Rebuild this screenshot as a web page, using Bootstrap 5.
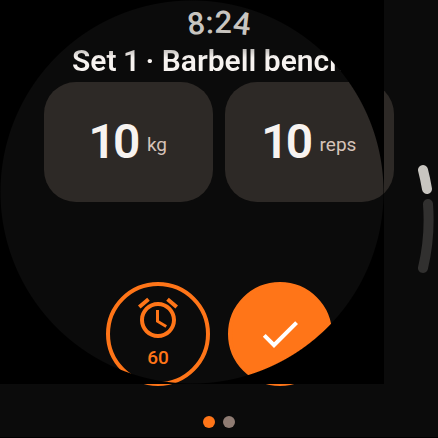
<!DOCTYPE html>
<html lang="en">
<head>
<meta charset="utf-8">
<meta name="viewport" content="width=device-width, initial-scale=1">
<title>Workout set</title>
<link href="https://cdn.jsdelivr.net/npm/bootstrap@5.3.0/dist/css/bootstrap.min.css" rel="stylesheet">
<style>
  :root { --accent: #ff7518; --surface: #0b0b0b; --tile: #2d2926; --ink: #f7f3f0; --soft: #d6c3b9; }
  body { background: var(--surface); color: var(--ink); font-family: Roboto, "Liberation Sans", sans-serif; }
  .watch { padding-bottom: 9px; border-bottom: 1px solid #000; }
  .clock { height: 40px; overflow: visible; }
  .clock text { font-size: 31px; font-weight: 500; fill: #c8c5c0; }
  .set-title {
    font-size: 30px; line-height: 42px; font-weight: 600; padding-left: 72px; font-variant-numeric: proportional-nums;
    background: linear-gradient(#bbb8b5 8px, var(--ink) 18px); -webkit-background-clip: text; background-clip: text; color: transparent;
  }
  .tiles { gap: 12px; padding: 0 44px; }
  .tile { height: 120px; border: 0; border-radius: 32px; background: var(--tile); color: var(--ink); gap: 6px; }
  .amount { font-size: 48px; line-height: 56px; font-weight: 600; font-variant-numeric: proportional-nums; }
  .unit { font-size: 19px; line-height: 24px; color: var(--soft); padding-top: 6px; }
  .actions { gap: 18px; padding-top: 80px; }
  .round { width: 104px; height: 104px; border: 4px solid var(--accent); color: var(--accent); background: transparent; }
  .round-fill { background: var(--accent); color: #fff; }
  .secs { font-size: 19px; line-height: 24px; font-weight: 500; }
  .pages { gap: 8px; padding-top: 30px; }
  .page-dot { width: 12px; height: 12px; border: 0; background: #8f7c73; }
  .page-dot.active { background: var(--accent); }
  .bezel { width: 384px; height: 384px; background: radial-gradient(circle closest-side, transparent 191px, #000 192px); }
  .scroll-arc { width: 20px; height: 120px; }
</style>
<script src="https://cdn.jsdelivr.net/npm/bootstrap@5.3.0/dist/js/bootstrap.bundle.min.js"></script>
</head>
<body>
<main class="watch position-relative overflow-hidden min-vh-100 d-flex flex-column">
  <svg class="clock d-block mx-auto" width="120" height="40" viewBox="159 0 120 40" role="img" aria-label="8:24">
    <path id="rim" d="M89 86A186 186 0 0 1 349 86" fill="none"/>
    <text text-anchor="middle"><textPath href="#rim" startOffset="50%">8:24</textPath></text>
  </svg>
  <h1 class="set-title text-nowrap overflow-hidden m-0">Set 1 · Barbell bench</h1>
  <div class="tiles d-flex">
    <button type="button" class="tile flex-fill w-50 p-0 d-flex align-items-center justify-content-center"><span class="amount">10</span><span class="unit">kg</span></button>
    <button type="button" class="tile flex-fill w-50 p-0 d-flex align-items-center justify-content-center"><span class="amount">10</span><span class="unit">reps</span></button>
  </div>
  <div class="actions d-flex justify-content-center">
    <button type="button" class="round rounded-circle p-0 d-flex flex-column align-items-center" aria-label="Rest timer, 60 seconds">
      <svg class="mt-2" width="48" height="48" viewBox="0 0 24 24" fill="currentColor" aria-hidden="true"><path d="M22 5.72l-4.6-3.86-1.29 1.53 4.6 3.86L22 5.72zM7.88 3.39L6.6 1.86 2 5.71l1.29 1.53 4.59-3.85zM12.5 8H11v6l4.75 2.85.75-1.23-4-2.37V8zM12 4c-4.97 0-9 4.03-9 9s4.02 9 9 9c4.97 0 9-4.03 9-9s-4.03-9-9-9zm0 16c-3.87 0-7-3.13-7-7s3.13-7 7-7 7 3.13 7 7-3.13 7-7 7z"/></svg>
      <span class="secs mt-1">60</span>
    </button>
    <button type="button" class="round round-fill rounded-circle p-0 d-flex align-items-center justify-content-center" aria-label="Complete set">
      <svg width="48" height="48" viewBox="0 0 24 24" fill="currentColor" aria-hidden="true"><path d="M9 16.17L4.83 12l-1.42 1.41L9 19 21 7l-1.41-1.41z"/></svg>
    </button>
  </div>
  <nav class="pages d-flex justify-content-center" aria-label="Pages">
    <button type="button" class="page-dot active rounded-circle p-0" aria-label="Page 1"></button>
    <button type="button" class="page-dot rounded-circle p-0" aria-label="Page 2"></button>
  </nav>
  <svg class="scroll-arc position-absolute top-50 end-0 translate-middle-y" viewBox="418 159 20 120" fill="none" stroke-width="10" stroke-linecap="round" aria-hidden="true">
    <path d="M428 204A210 210 0 0 1 423 268" stroke="#31302f"/>
    <path d="M423 170A210 210 0 0 1 427 189" stroke="#c8c5c0"/>
  </svg>
  <div class="bezel position-absolute top-0 start-0 pe-none"></div>
</main>
</body>
</html>
